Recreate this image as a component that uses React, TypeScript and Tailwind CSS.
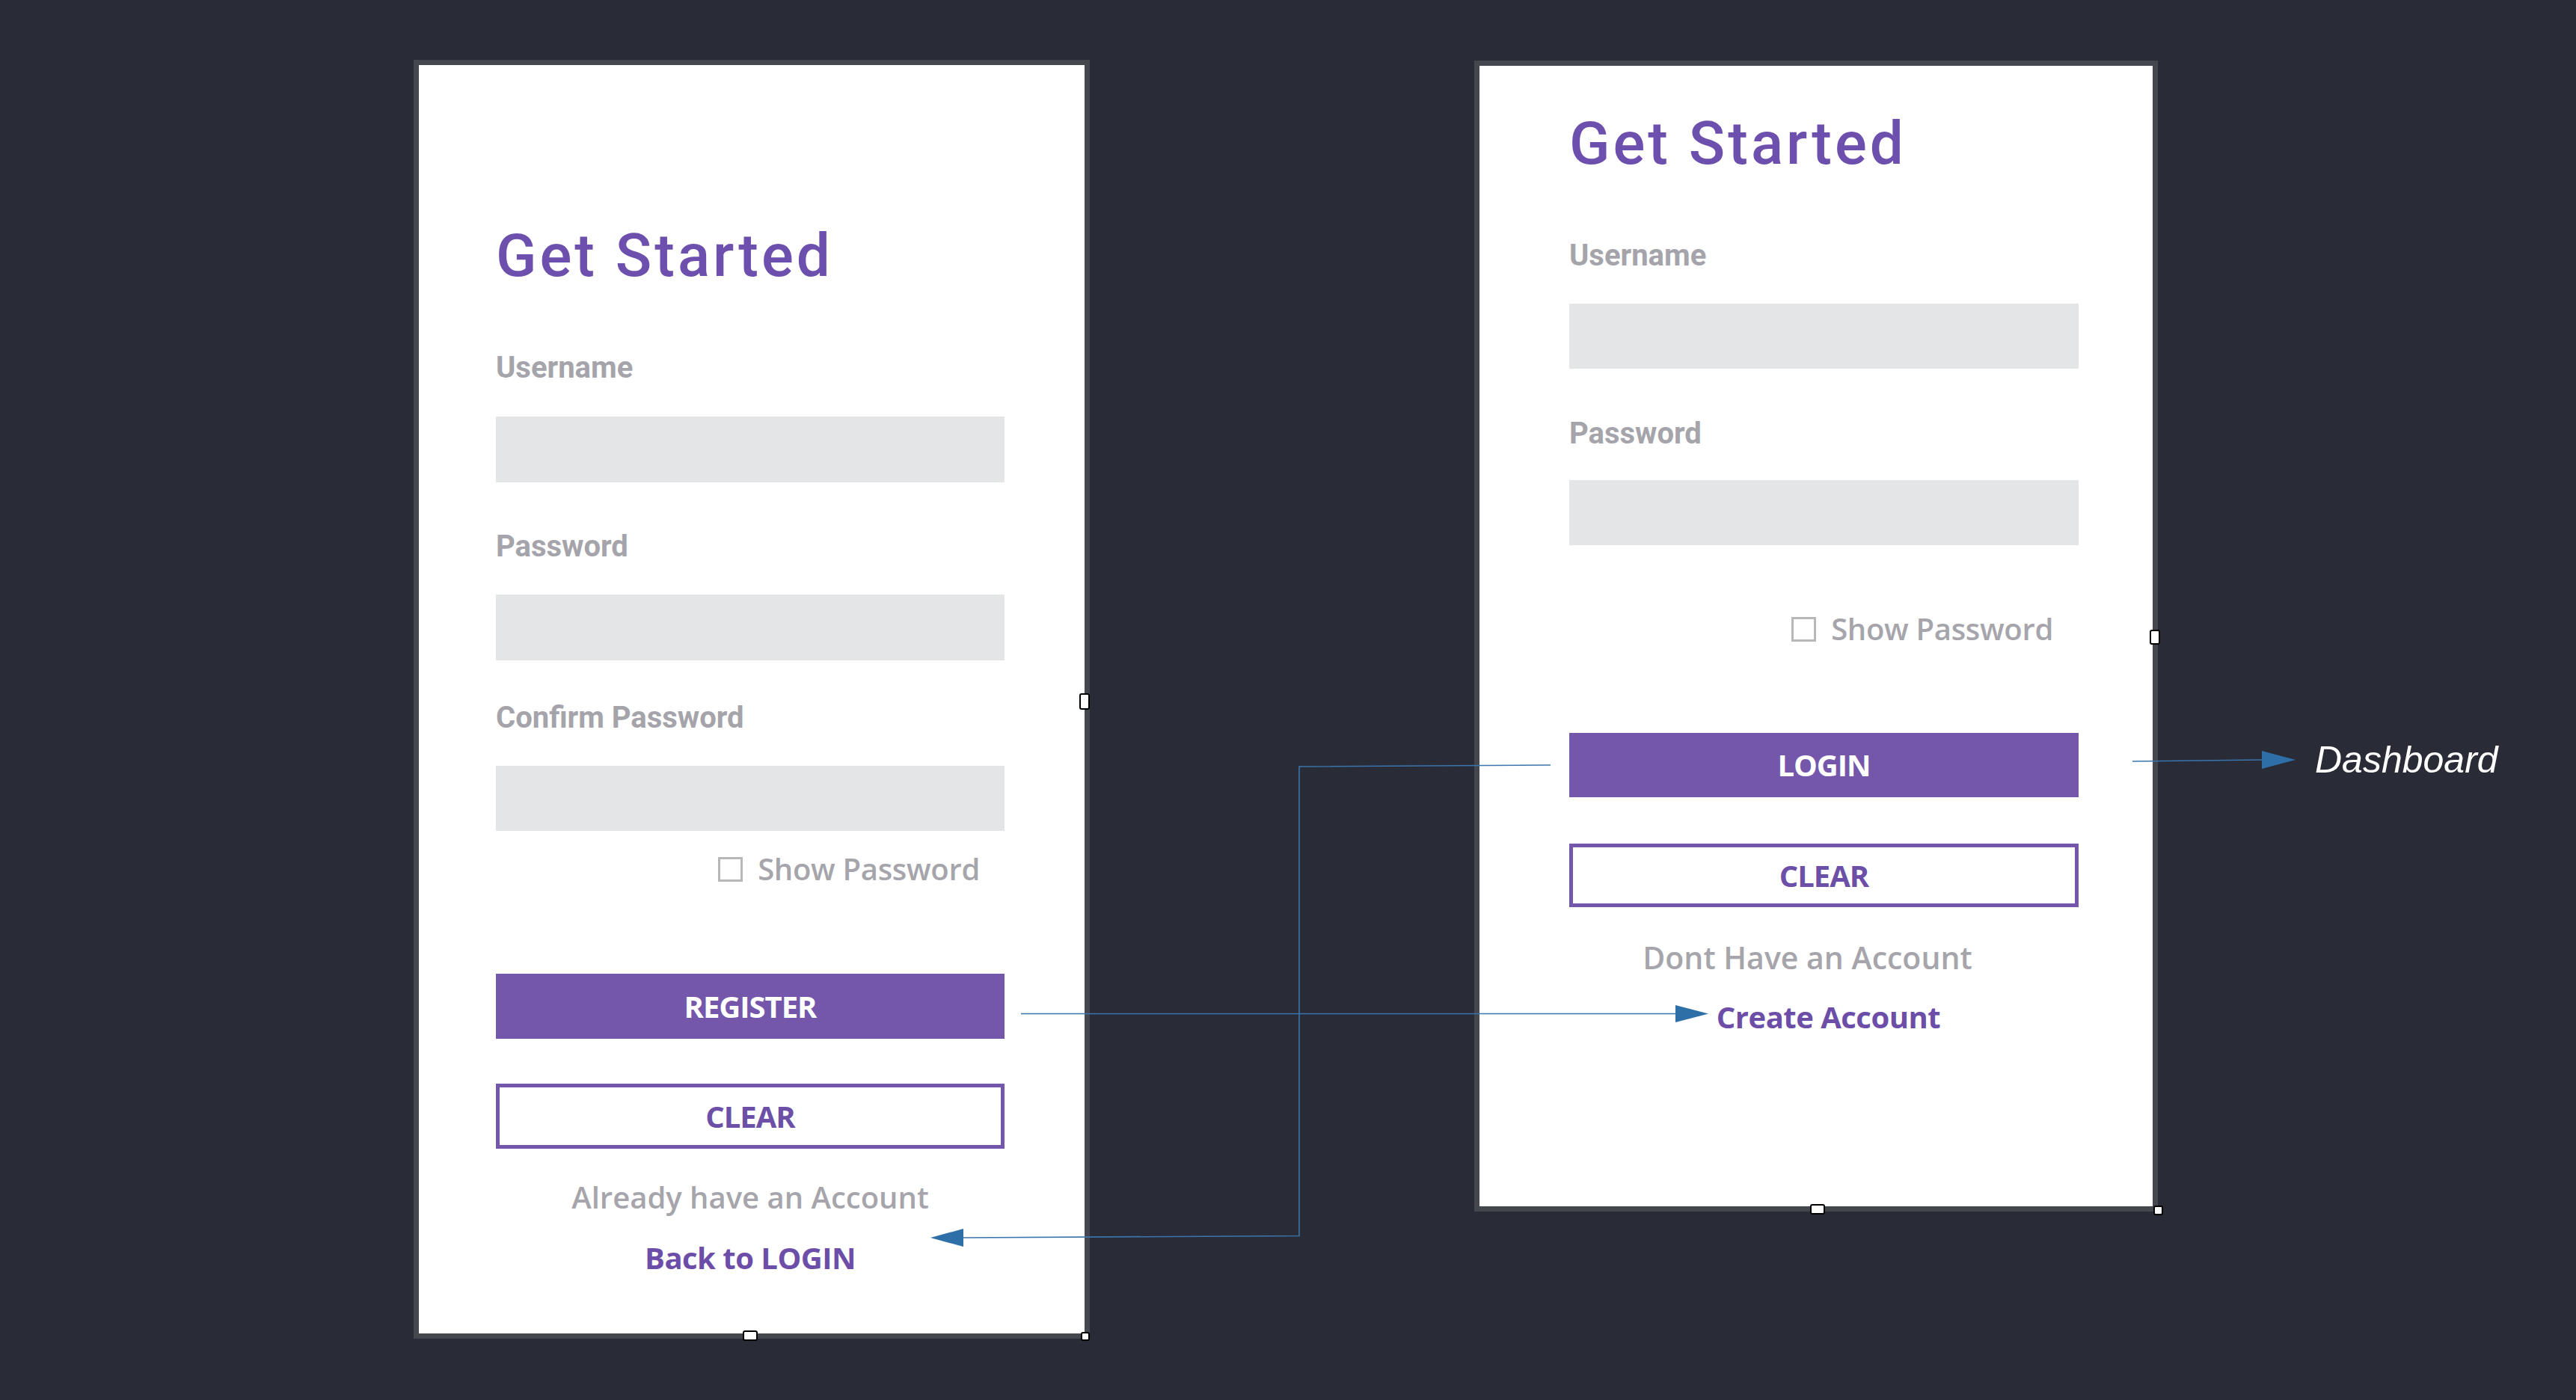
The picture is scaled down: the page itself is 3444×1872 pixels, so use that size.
import React from 'react';

function Label({ children, className = '' }: { children: React.ReactNode; className?: string }) {
    return (
        <div className={`font-['Roboto',sans-serif] font-bold text-[40px] leading-none text-[#a4a4aa] ${className}`}>
            {children}
        </div>
    );
}

function Field({ className = '' }: { className?: string }) {
    return <div className={`w-full bg-[#e4e5e7] ${className}`} />;
}

function ShowPassword({ className = '' }: { className?: string }) {
    return (
        <div className={`flex items-center justify-end gap-[20px] font-['Open_Sans',sans-serif] font-semibold text-[40px] leading-none tracking-[-0.3px] text-[#a5a5ab] ${className}`}>
            <span className="w-[33px] h-[33px] border-[3px] border-[#b8b8b8] bg-white" />
            <span>Show Password</span>
        </div>
    );
}

function Handle({ className }: { className: string }) {
    return <span className={`absolute bg-white border-2 border-black rounded-[3px] ${className}`} />;
}

const title = "font-['Roboto',sans-serif] font-medium text-[80px] leading-none tracking-[4px] text-[#6d4fae]";
const solidBtn =
    "w-full flex items-center justify-center bg-[#7456ab] text-white font-['Open_Sans',sans-serif] font-bold text-[40px] leading-none tracking-[-1px]";
const outlineBtn =
    "w-full flex items-center justify-center border-[5px] border-[#7456ab] bg-white text-[#6c4fa6] font-['Open_Sans',sans-serif] font-bold text-[40px] leading-none tracking-[-1px]";
const note = "font-['Open_Sans',sans-serif] font-semibold leading-none text-[#a5a5ab]";
const link = "font-['Open_Sans',sans-serif] font-bold text-[40px] leading-none tracking-[-0.5px] text-[#6c4ea8]";

function RegisterCard() {
    return (
        <div className="relative w-[904px] h-[1710px] shrink-0 border-[7px] border-[#45474f] bg-white pl-[103px] pr-[107px] pt-[215px] flex flex-col">
            <h1 className={title}>Get Started</h1>

            <Label className="mt-[90px]">Username</Label>
            <Field className="mt-[45px] h-[88px]" />

            <Label className="mt-[66px]">Password</Label>
            <Field className="mt-[44px] h-[88px]" />

            <Label className="mt-[57px]">Confirm Password</Label>
            <Field className="mt-[44px] h-[87px]" />

            <ShowPassword className="mt-[31px] pr-[33px]" />

            <button className={`${solidBtn} mt-[120px] h-[87px]`}>REGISTER</button>
            <button className={`${outlineBtn} mt-[60px] h-[87px]`}>CLEAR</button>

            <p className={`${note} text-[40px] text-center mt-[45px]`}>Already have an Account</p>
            <p className={`${link} text-center mt-[41px]`}>Back to LOGIN</p>

            <Handle className="left-[883px] top-[840px] w-[14px] h-[22px]" />
            <Handle className="left-[433px] top-[1692px] w-[20px] h-[14px]" />
            <Handle className="left-[885px] top-[1694px] w-[12px] h-[12px]" />
        </div>
    );
}

function LoginCard() {
    return (
        <div className="relative mt-[1px] w-[914px] h-[1539px] shrink-0 border-[7px] border-[#45474f] bg-white pl-[120px] pr-[99px] pt-[64px] flex flex-col">
            <h1 className={title}>Get Started</h1>

            <Label className="mt-[90px]">Username</Label>
            <Field className="mt-[44px] h-[87px]" />

            <Label className="mt-[67px]">Password</Label>
            <Field className="mt-[42px] h-[87px]" />

            <ShowPassword className="mt-[92px] pr-[34px]" />

            <button className={`${solidBtn} mt-[119px] h-[86px]`}>LOGIN</button>
            <button className={`${outlineBtn} mt-[62px] h-[85px]`}>CLEAR</button>

            <p className={`${note} text-[41px] text-center pr-[44px] mt-[47px]`}>Dont Have an Account</p>
            <p className={`${link} text-center pl-[12px] mt-[39px]`}>Create Account</p>

            <Handle className="left-[896px] top-[754px] w-[14px] h-[20px]" />
            <Handle className="left-[442px] top-[1522px] w-[20px] h-[14px]" />
            <Handle className="left-[901px] top-[1524px] w-[13px] h-[13px]" />
        </div>
    );
}

export default function App() {
    return (
        <div className="relative w-[3444px] h-[1872px] overflow-hidden bg-[#292b37]">
            <div className="flex items-start pl-[553px] pt-[80px] gap-[514px]">
                <RegisterCard />
                <LoginCard />
            </div>

            {/* flow connectors between screens */}
            <svg className="absolute inset-0 pointer-events-none" width="3444" height="1872" viewBox="0 0 3444 1872">
                <g fill="none" stroke="#3a76ad" strokeWidth="1.6">
                    <path d="M1365 1355.5 H2240" />
                    <path d="M2073 1023 L1737 1025 L1737 1652.5 L1288 1655" />
                    <path d="M2851 1018 L3024 1016" />
                </g>
                <g fill="#2f6fa7">
                    <polygon points="2240,1344 2284,1355.5 2240,1367" />
                    <polygon points="1288,1643 1244,1655 1288,1667" />
                    <polygon points="3024,1004 3069,1016 3024,1028" />
                </g>
            </svg>

            <span className="absolute left-[3095px] top-[991px] font-['Liberation_Sans',Arial,sans-serif] italic text-[50px] leading-none text-white">
                Dashboard
            </span>
        </div>
    );
}
